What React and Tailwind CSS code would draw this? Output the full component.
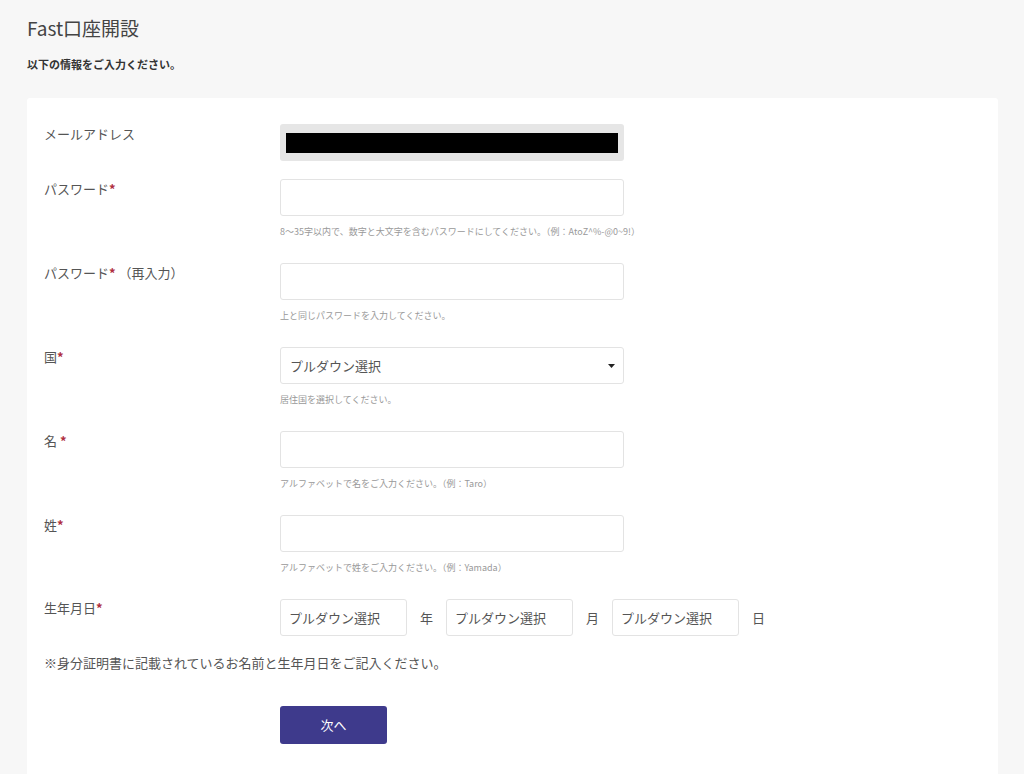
import React from "react";

const font = { fontFamily: '"Noto Sans CJK JP", "Noto Sans", sans-serif' };

function Star() {
  return <span className="font-bold text-[#b0303f]">*</span>;
}

function Row({ label, children, hint }) {
  return (
    <div className="flex">
      <div className="w-[236px] shrink-0 pt-[1px] text-[13px] leading-[18px] text-[#555]">{label}</div>
      <div className="w-[344px]">
        {children}
        {hint && <div className="mt-[9px] text-[9px] leading-[13px] text-[#999] whitespace-nowrap">{hint}</div>}
      </div>
    </div>
  );
}

function Input() {
  return <div className="h-[37px] w-[344px] rounded-[3px] border border-[#e3e3e3] bg-white" />;
}

function SmallSelect() {
  return (
    <div className="flex h-[37px] w-[127px] items-center rounded-[3px] border border-[#e3e3e3] bg-white pl-[8px] text-[13px] text-[#555]">
      プルダウン選択
    </div>
  );
}

export default function App() {
  return (
    <div className="min-h-[774px] bg-[#f7f7f7] px-[27px] pt-[14px]" style={font}>
      <h1 className="text-[19px] leading-[28px] text-[#444]">Fast口座開設</h1>
      <p className="mt-[14px] text-[11px] font-bold leading-[16px] text-[#333]">以下の情報をご入力ください。</p>
      <div className="mt-[26px] w-[971px] rounded-[3px] bg-white pb-[40px] pl-[17px] pt-[26px]">
        <div className="flex flex-col">
          <Row label="メールアドレス">
            <div className="flex h-[37px] w-[344px] items-center rounded-[3px] bg-[#e6e6e6] px-[6px]">
              <div className="h-[20px] w-full bg-black" />
            </div>
          </Row>
          <div className="mt-[18px]">
            <Row label={<>パスワード<Star /></>} hint="8～35字以内で、数字と大文字を含むパスワードにしてください。（例：AtoZ^%-@0~9!）">
              <Input />
            </Row>
          </div>
          <div className="mt-[25px]">
            <Row label={<>パスワード<Star /> （再入力）</>} hint="上と同じパスワードを入力してください。">
              <Input />
            </Row>
          </div>
          <div className="mt-[25px]">
            <Row label={<>国<Star /></>} hint="居住国を選択してください。">
              <div className="flex h-[37px] w-[344px] items-center justify-between rounded-[3px] border border-[#e3e3e3] bg-white pl-[9px] pr-[8px] text-[13px] text-[#555]">
                <span>プルダウン選択</span>
                <svg width="7" height="4" viewBox="0 0 7 4"><path d="M0 0h7L3.5 4z" fill="#222" /></svg>
              </div>
            </Row>
          </div>
          <div className="mt-[25px]">
            <Row label={<>名 <Star /></>} hint="アルファベットで名をご入力ください。（例：Taro）">
              <Input />
            </Row>
          </div>
          <div className="mt-[25px]">
            <Row label={<>姓<Star /></>} hint="アルファベットで姓をご入力ください。（例：Yamada）">
              <Input />
            </Row>
          </div>
          <div className="mt-[25px] flex">
            <div className="w-[236px] shrink-0 text-[13px] leading-[18px] text-[#555]">生年月日<Star /></div>
            <div className="flex items-center text-[13px] text-[#555]">
              <SmallSelect />
              <span className="w-[39px] text-center">年</span>
              <SmallSelect />
              <span className="w-[39px] text-center">月</span>
              <SmallSelect />
              <span className="w-[39px] text-center">日</span>
            </div>
          </div>
          <p className="mt-[17px] text-[13px] leading-[20px] text-[#555]">※身分証明書に記載されているお名前と生年月日をご記入ください。</p>
          <div className="mt-[33px] pl-[236px]">
            <button className="h-[38px] w-[107px] rounded-[3px] bg-[#3e3a8c] text-[13px] text-white">次へ</button>
          </div>
        </div>
      </div>
    </div>
  );
}
